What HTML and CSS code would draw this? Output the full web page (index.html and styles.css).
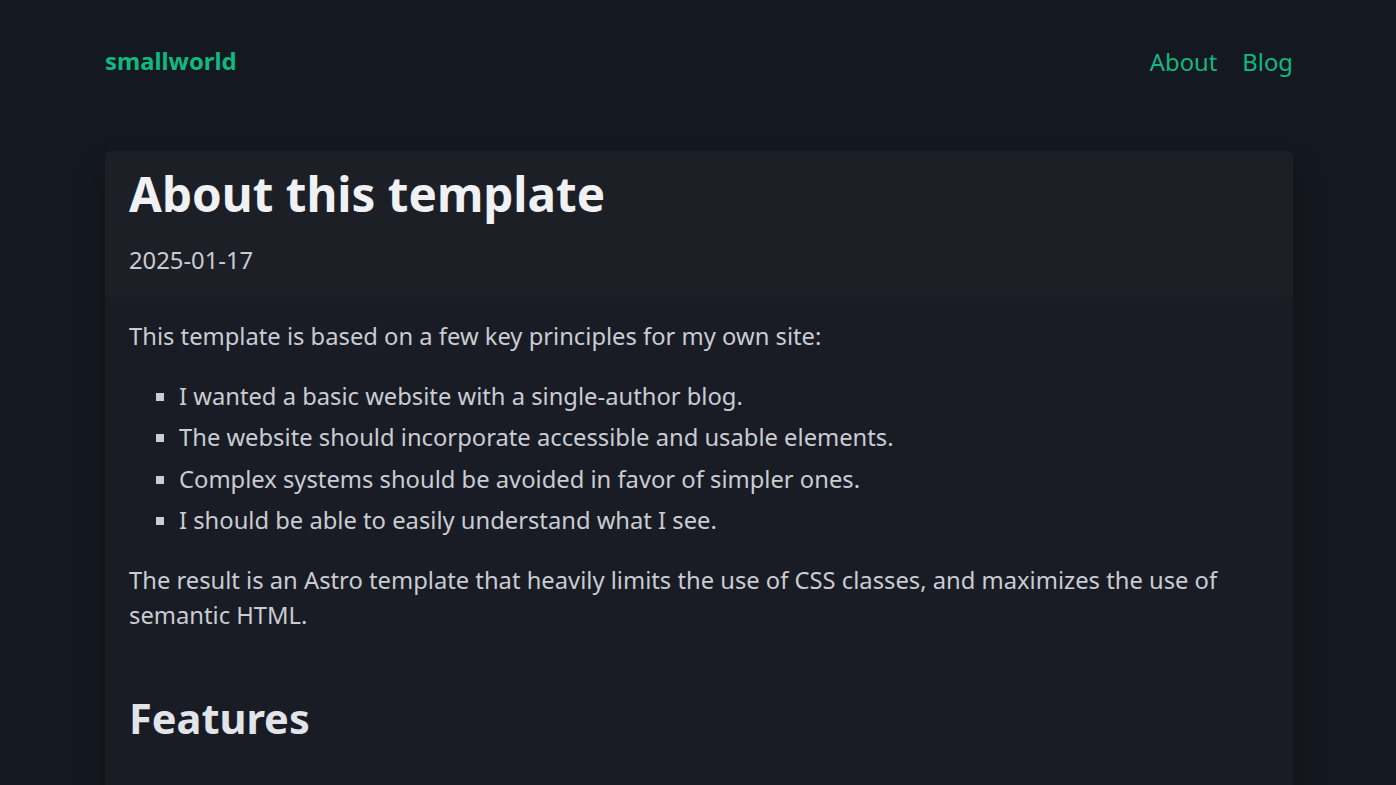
FILE: index.html
```html
<!DOCTYPE html>
<html lang="en">
<head>
<meta charset="utf-8">
<title>About this template</title>
<link rel="stylesheet" href="styles.css">
</head>
<body>
<div class="page">
  <header class="site-header">
    <a class="logo" href="#">smallworld</a>
    <nav class="nav">
      <a href="#">About</a>
      <a href="#">Blog</a>
    </nav>
  </header>
  <article class="card">
    <div class="card-head">
      <h1 class="title">About this template</h1>
      <p class="date">2025-01-17</p>
    </div>
    <div class="card-body">
      <p>This template is based on a few key principles for my own site:</p>
      <ul class="list">
        <li>I wanted a basic website with a single-author blog.</li>
        <li>The website should incorporate accessible and usable elements.</li>
        <li>Complex systems should be avoided in favor of simpler ones.</li>
        <li>I should be able to easily understand what I see.</li>
      </ul>
      <p>The result is an Astro template that heavily limits the use of CSS classes, and maximizes the use of semantic HTML.</p>
      <h2 class="subtitle">Features</h2>
    </div>
  </article>
</div>
</body>
</html>
```
FILE: styles.css
```css
html, body {
  margin: 0;
  padding: 0;
  background: #141820;
  font-family: "Noto Sans", "Open Sans", sans-serif;
  color: #c9ccd3;
  height: 100%;
  overflow: hidden;
}
body {
  padding-left: 2px;
  box-sizing: border-box;
}
.page {
  width: 1188px;
  margin: 0 auto;
}
.site-header {
  display: flex;
  justify-content: space-between;
  align-items: center;
  height: 123px;
  padding-bottom: 28px;
  box-sizing: content-box;
}
.logo {
  color: #10b981;
  font-weight: 700;
  font-size: 23.8px;
  text-decoration: none;
  margin-top: -1px;
}
.nav {
  display: flex;
  gap: 25px;
}
.nav a {
  color: #10b981;
  font-size: 23.8px;
  text-decoration: none;
}
.card {
  background: #191c24;
  border-radius: 6px;
  box-shadow: 0 20px 30px rgba(0,0,0,0.25);
  min-height: 700px;
}
.card-head {
  background: #1c1f26;
  border-radius: 6px 6px 0 0;
  padding: 14px 24px 19px;
}
.title {
  margin: 0;
  font-size: 47.6px;
  line-height: 1.2;
  font-weight: 700;
  color: #eff1f4;
}
.date {
  margin: 21px 0 0;
  font-size: 23.8px;
  line-height: 1.45;
  color: #c9ccd3;
}
.card-body {
  padding: 22px 24px;
  font-size: 23.75px;
  line-height: 35px;
}
.card-body p {
  margin: 0 0 25px;
}
.list {
  margin: 0 0 25px;
  padding-left: 50px;
  list-style: square;
}
.list li {
  margin-bottom: 6.5px;
}
.subtitle {
  margin: 61px 0 0;
  font-size: 41.5px;
  line-height: 1.2;
  font-weight: 700;
  color: #e1e4e9;
}
```
